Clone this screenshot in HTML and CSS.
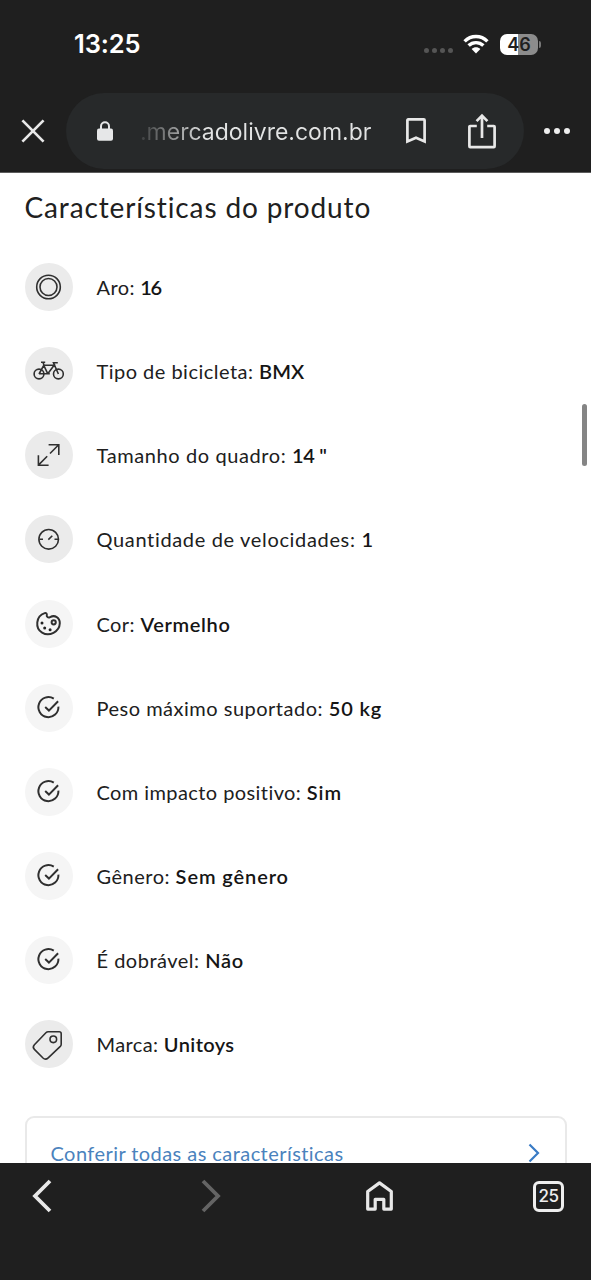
FILE: index.html
```html
<!DOCTYPE html>
<html lang="pt-BR">
<head>
<meta charset="utf-8">
<title>Características do produto</title>
<link rel="stylesheet" href="styles.css">
</head>
<body>
<svg class="defs" width="0" height="0" aria-hidden="true">
  <symbol id="check" viewBox="0 0 48 48">
    <path d="M28.800 14.700A10 10 0 1 0 33.400 22.600M20.200 23.100l3.700 3.500 9.200-9.300"/>
  </symbol>
</svg>
<div class="phone">
  <header class="top">
    <div class="status">
      <span class="clock">13:25</span>
      <div class="status-icons">
        <span class="signal"><i></i><i></i><i></i><i></i></span>
        <svg class="wifi" width="26" height="20" viewBox="0 0 26 20">
          <path d="M1.600 7.400C8 .900 18 .900 24.400 7.400M5.600 11.600c4.200-4 10.600-4 14.800 0" fill="none" stroke="#fff" stroke-width="3.400"/>
          <path d="M8.600 15c2.600-2.300 6.200-2.300 8.800 0L13 19.400z" fill="#fff"/>
        </svg>
        <span class="battery"><b>46</b></span><span class="battery-tip"></span>
      </div>
    </div>
    <div class="browser">
      <svg class="close" width="24" height="24" viewBox="0 0 24 24"><path d="M1.400 1.400l21.200 21.200M22.600 1.400L1.400 22.600"/></svg>
      <div class="address">
        <svg class="lock" width="16" height="20" viewBox="0 0 16 20"><path d="M4 9V5.200a4 4 0 0 1 8 0V9" fill="none" stroke="#e6e7e8" stroke-width="2"/><rect y="7.400" width="16" height="12.300" rx="2" fill="#e6e7e8"/></svg>
        <span class="url">.mercadolivre.com.br</span>
        <svg class="bookmark" width="20" height="26" viewBox="0 0 20 26"><path d="M1.400 2.200q0-.8.8-.8h15.600q.8 0 .8.8v21.200L10 19.800l-8.600 3.600z"/></svg>
        <svg class="share" width="28" height="36" viewBox="0 0 28 36"><path d="M8.800 13H2.200a.8.8 0 0 0-.8.8v19.400c0 .6.3.9.8.9h23.600c.5 0 .8-.3.8-.9V13.800a.8.8 0 0 0-.8-.8h-6.600M14 25V2.800M8.600 8.100L14 2.600l5.400 5.500"/></svg>
      </div>
      <span class="more"><i></i><i></i><i></i></span>
    </div>
  </header>

  <main class="page">
    <h1>Características do produto</h1>
    <ul class="specs">
      <li><svg class="icon" viewBox="0 0 48 48"><circle cx="23.500" cy="24" r="11.800"/><circle cx="23.500" cy="24" r="8.500"/></svg><p class="rim">Aro: <b>16</b></p></li>
      <li><svg class="icon" viewBox="0 0 48 48"><circle cx="14" cy="27" r="4.900"/><circle cx="33.400" cy="27" r="4.900"/><path d="M14 27l4.800-8.700h10.300L22.800 26.800H14M18.800 18.300l4 8.500M16 15.300h4.200M18 15.300l1 3M33.400 27l-4.900-11.300h4.300M22.800 26.800h2"/></svg><p class="type">Tipo de bicicleta: <b>BMX</b></p></li>
      <li><svg class="icon" viewBox="0 0 48 48"><path d="M25 22.500l8.700-8.700M23.600 13.800h10.200V24M22.200 25.300l-8.800 8.800M13.400 24.200v10.100h10.200"/></svg><p class="frame">Tamanho do quadro: <b>14 "</b></p></li>
      <li><svg class="icon" viewBox="0 0 48 48"><circle cx="23.700" cy="24.300" r="9.800"/><path d="M14.300 24.300H18M29.500 24.300h3.800M23.300 24.600l4-3.900"/></svg><p class="gears">Quantidade de velocidades: <b>1</b></p></li>
      <li><svg class="icon light" viewBox="0 0 48 48"><path d="M19.700 13.100c-9 3-9.900 15-2.600 19.500 7 4.300 17.400-.5 17.700-9.300.1-5.900-5-8.700-9.700-6.200-1.800 1-3.800-.1-3.300-2 .3-1.300-.7-2.500-2.100-2z"/><circle cx="28.700" cy="22.300" r="2.100"/><g class="dots"><circle cx="17" cy="23" r="1.500"/><circle cx="19.700" cy="28" r="1.500"/><circle cx="25.100" cy="29.800" r="1.500"/></g></svg><p class="color">Cor: <b>Vermelho</b></p></li>
      <li><svg class="icon light"><use href="#check"/></svg><p class="weight">Peso máximo suportado: <b>50 kg</b></p></li>
      <li><svg class="icon light"><use href="#check"/></svg><p class="impact">Com impacto positivo: <b>Sim</b></p></li>
      <li><svg class="icon light"><use href="#check"/></svg><p class="gender">Gênero: <b>Sem gênero</b></p></li>
      <li><svg class="icon light"><use href="#check"/></svg><p class="fold">É dobrável: <b>Não</b></p></li>
      <li><svg class="icon thin" viewBox="0 0 48 48"><path d="M23.100 11.700h11.100c1.300 0 2 .7 2 2v10.500c0 1-.2 1.500-.9 2.200L23.200 37.800c-1.800 1.700-3.500 1.800-5.200.2l-8.600-8.600c-1.500-1.500-1.400-3.100 0-4.600l11.500-12.100c.7-.7 1.300-1 2.200-1z"/><circle cx="28.300" cy="19.300" r="3.300"/></svg><p class="brand">Marca: <b>Unitoys</b></p></li>
    </ul>
    <a class="all">
      <span>Conferir todas as características</span>
      <svg width="12" height="20" viewBox="0 0 12 20"><path d="M1.500 1.500L10 10l-8.500 8.500"/></svg>
    </a>
    <span class="scrollbar"></span>
  </main>

  <nav class="bottom">
    <svg class="back" width="20" height="34" viewBox="0 0 20 34"><path d="M18 2L3 17l15 15"/></svg>
    <svg class="off" width="20" height="34" viewBox="0 0 20 34"><path d="M2 2l15 15L2 32"/></svg>
    <svg class="home" width="27" height="30" viewBox="0 0 27 30"><path d="M1.700 10.500L13.500 1.900l11.800 8.600v17.600h-7.500v-9.800H9.200v9.800H1.700z"/></svg>
    <span class="tabs">25</span>
  </nav>
</div>
</body>
</html>
```
FILE: styles.css
```css
* { box-sizing: border-box; }
body { margin: 0; background: #fff; font-family: Lato, "Open Sans", sans-serif; }
.defs { position: absolute; }
.phone { width: 591px; height: 1280px; display: flex; flex-direction: column; overflow: hidden; }

.top { height: 173px; flex: none; background: #1f1f1f; border-bottom: 1px solid #5c5c5c; color: #fff; }
.status { height: 93px; padding: 0 50px 5px 74px; display: flex; align-items: center; justify-content: space-between; }
.clock { font: 600 25.500px/30px Inter, sans-serif; letter-spacing: -.1px; }
.status-icons { display: flex; align-items: center; }
.signal { display: flex; gap: 3px; margin: 13px 10px 0 0; }
.signal i { width: 5px; height: 5px; border-radius: 50%; background: #555; }
.wifi { margin-right: 11px; }
.battery { width: 38px; height: 21px; border-radius: 7px; background: linear-gradient(90deg, #fff 18px, #8c8c8c 18px); color: #1f1f1f; text-align: center; }
.battery b { display: block; font: 600 18px/21px Inter, sans-serif; }
.battery-tip { width: 2px; height: 7px; margin-left: 1px; border-radius: 0 3px 3px 0; background: #777; }
.browser { height: 76px; padding: 0 21px; display: flex; align-items: center; }
.close, .bookmark, .share, .bottom svg { fill: none; stroke: #e8e8e8; stroke-width: 2.7; }
.close { margin-right: 21px; }
.address { width: 459px; height: 76px; padding-left: 31px; border-radius: 38px; background: #27292a; display: flex; align-items: center; }
.lock { margin-right: 27px; }
.url { width: 234px; margin: 1px 32px 0 0; font: 400 23px/30px Inter, sans-serif; white-space: nowrap; background: linear-gradient(90deg, #3a3c3d 0, #e2e3e3 65px); background-clip: text; -webkit-background-clip: text; color: transparent; }
.bookmark { margin-right: 42px; }
.more { display: flex; gap: 4px; margin-left: 20px; }
.more i { width: 6px; height: 6px; border-radius: 50%; background: #eee; }

.page { position: relative; height: 990px; flex: none; overflow: hidden; padding: 0 24.500px; color: #202020; }
h1 { margin: 0; padding-top: 14px; font-size: 28px; line-height: 40px; font-weight: 400; letter-spacing: .87px; white-space: nowrap; }
.specs { margin: 36px 0 0; padding: 0; list-style: none; }
.specs li { height: 84.150px; display: flex; gap: 24px; }
.specs p { margin: 1px 0 0; font-size: 20px; line-height: 47px; letter-spacing: .5px; white-space: nowrap; }
.specs b { font-weight: 600; color: #151515; }
.specs .rim { letter-spacing: .4px; }
.specs .rim b { letter-spacing: -1.400px; }
.specs .type { letter-spacing: .48px; }
.specs .type b { letter-spacing: .1px; }
.specs .frame { letter-spacing: .6px; }
.specs .frame b { letter-spacing: -.3px; }
.specs .gears { letter-spacing: .66px; }
.specs .color { letter-spacing: .4px; }
.specs .color b { letter-spacing: .65px; }
.specs .weight b { letter-spacing: .9px; }
.specs .impact { letter-spacing: .42px; }
.specs .impact b { letter-spacing: .9px; }
.specs .gender b { letter-spacing: .9px; }
.specs .fold b { letter-spacing: .7px; }
.specs .brand { letter-spacing: .38px; }
.icon { width: 48px; height: 48px; flex: none; border-radius: 50%; background: #ebebeb; fill: none; stroke: #303030; stroke-width: 1.600; }
.light { background: #f5f5f5; stroke-width: 2; }
.dots { fill: #222; stroke: none; }
.all { width: 542px; height: 75px; margin-top: 11.500px; padding: 0 25px 0 24px; border: 2px solid #e9e9e9; border-radius: 9px; display: flex; align-items: center; justify-content: space-between; color: #4a82bd; font-size: 20px; letter-spacing: .44px; }
.all svg { fill: none; stroke: #397bc5; stroke-width: 2.200; }
.scrollbar { position: absolute; right: 4px; top: 231px; width: 5px; height: 62px; border-radius: 3px; background: #858585; }

.bottom { height: 117px; flex: none; background: #1f1f1f; padding: 16px 27px 0 32px; display: flex; align-items: flex-start; }
.bottom svg { stroke-width: 3.800; }
.bottom .back { margin-right: 149px; }
.bottom .off { stroke: #646464; margin-right: 145px; }
.bottom .home { stroke-width: 3.200; stroke-linejoin: round; margin: 2px 140px 0 0; }
.tabs { width: 31px; height: 31px; margin-top: 2px; border: 3px solid #eee; border-radius: 6px; color: #eee; font: 500 17px/25px Inter, sans-serif; letter-spacing: -.5px; text-align: center; }
```
